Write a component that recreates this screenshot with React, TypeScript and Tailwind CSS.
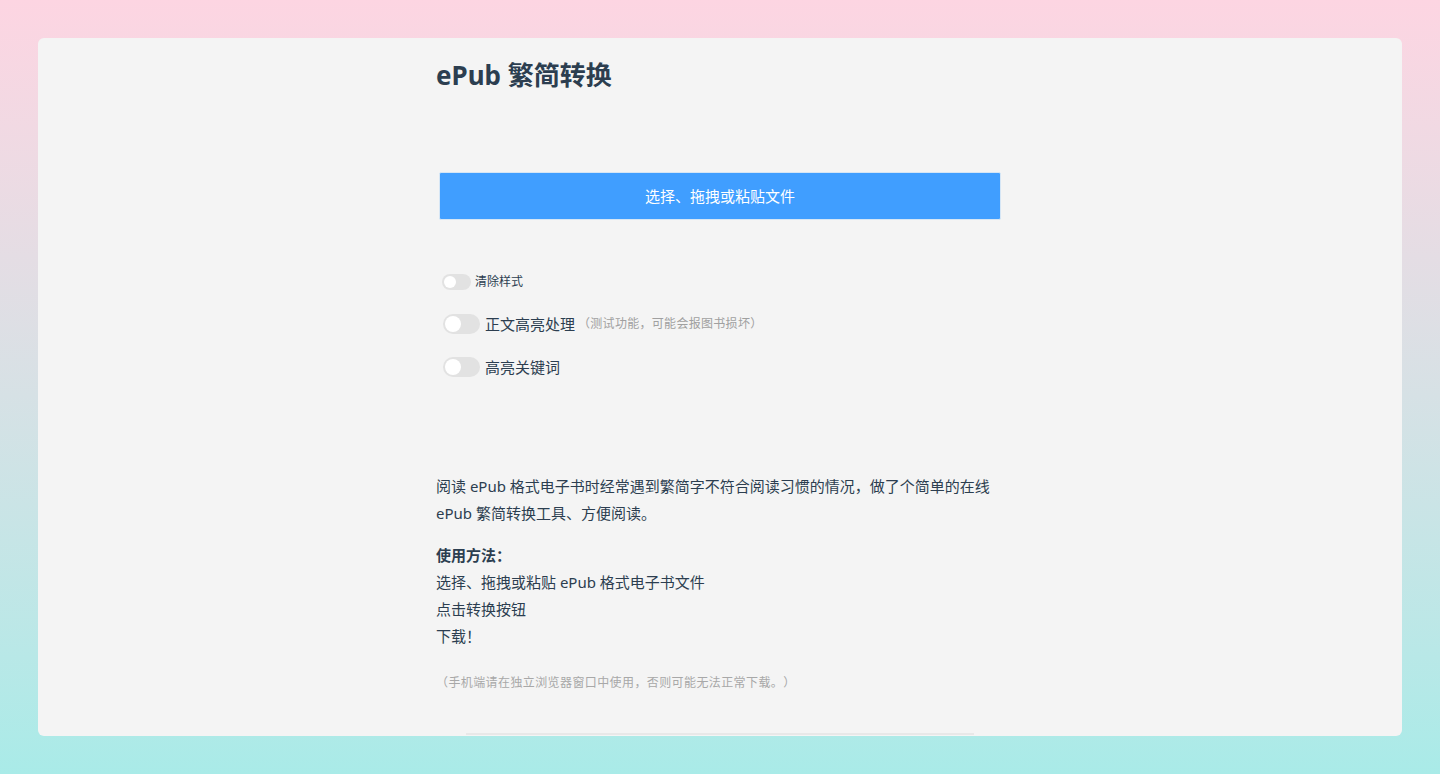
import React from "react";

function Toggle({ small }: { small?: boolean }) {
  return small ? (
    <span className="inline-flex h-[16px] w-[29px] items-center rounded-full bg-[#e2e2e2] px-[2px]">
      <span className="h-[12px] w-[12px] rounded-full bg-white" />
    </span>
  ) : (
    <span className="inline-flex h-[20px] w-[37px] items-center rounded-full bg-[#e2e2e2] px-[2px]">
      <span className="h-[16px] w-[16px] rounded-full bg-white" />
    </span>
  );
}

export default function App() {
  return (
    <div
      className="flex h-[774px] w-full items-start justify-center bg-gradient-to-b from-[#fdd5e2] to-[#a9ebe8] px-[38px] pt-[38px] [text-spacing-trim:space-all]"
      style={{ fontFamily: '"Noto Sans", "Noto Sans CJK SC", sans-serif' }}
    >
      <div className="h-[698px] w-full overflow-hidden rounded-[6px] bg-[#f4f4f4]">
        <div className="mx-auto w-[568px] text-[#2c3e50]">
          <h1 className="pt-[19px] text-[26px] font-bold leading-[36px]">
            ePub 繁简转换
          </h1>

          <div className="mt-[79px] px-[3px]">
            <div className="flex h-[48px] items-center justify-center rounded-[2px] border border-[#d6e6f5] bg-[#409eff] text-[15px] text-white">
              选择、拖拽或粘贴文件
            </div>
          </div>

          <div className="mt-[54px] flex flex-col pl-[6px]">
            <label className="flex h-[16px] items-center gap-[4px] text-[12px]">
              <Toggle small />
              <span>清除样式</span>
            </label>
            <label className="mt-[24px] flex h-[20px] items-center gap-[5px] pl-[1px] text-[15px]">
              <Toggle />
              <span>正文高亮处理</span>
              <span className="-ml-[2px] text-[12px] tracking-[0.3px] text-[#a0a0a0]">（测试功能，可能会报图书损坏）</span>
            </label>
            <label className="mt-[23px] flex h-[20px] items-center gap-[5px] pl-[1px] text-[15px]">
              <Toggle />
              <span>高亮关键词</span>
            </label>
          </div>

          <div className="mt-[96px] text-[15px] leading-[27px]">
            <p>
              阅读 ePub 格式电子书时经常遇到繁简字不符合阅读习惯的情况，做了个简单的在线 ePub 繁简转换工具、方便阅读。
            </p>
            <p className="mt-[15px] font-bold">使用方法：</p>
            <p>选择、拖拽或粘贴 ePub 格式电子书文件</p>
            <p>点击转换按钮</p>
            <p>下载！</p>
            <p className="mt-[23px] text-[12px] leading-[20px] tracking-[0.4px] text-[#a8a8a8]">
              （手机端请在独立浏览器窗口中使用，否则可能无法正常下载。）
            </p>
          </div>

          <div className="mx-auto mt-[40px] h-[2px] w-[508px] bg-[#e8e8e8]" />
        </div>
      </div>
    </div>
  );
}
